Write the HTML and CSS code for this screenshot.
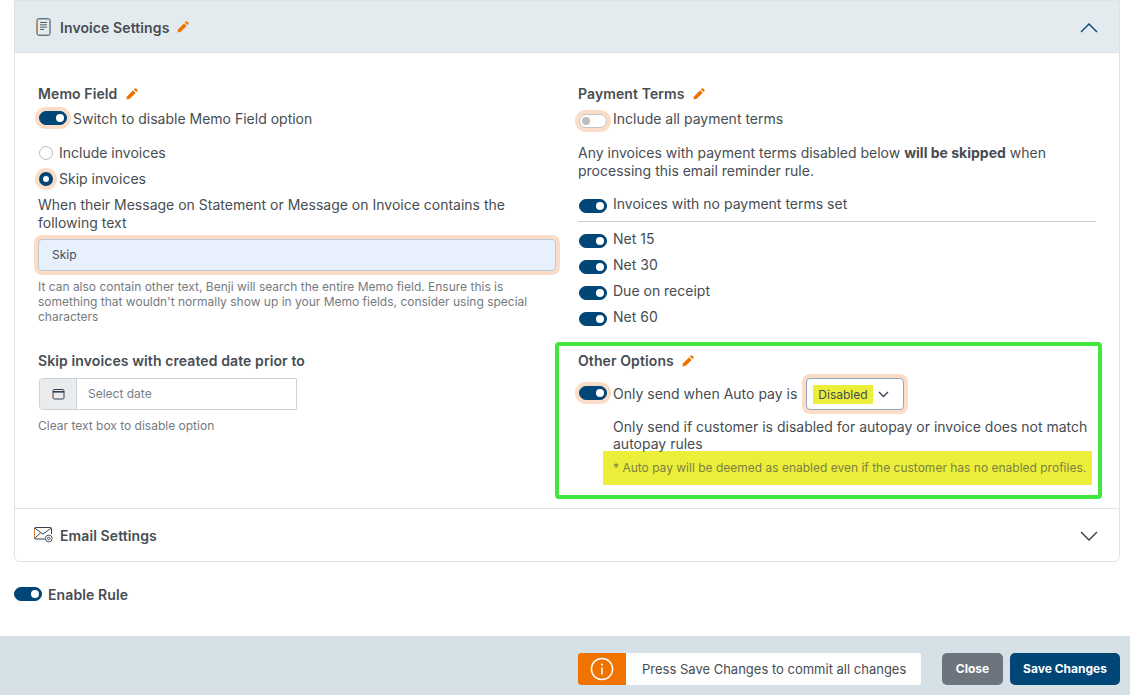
FILE: index.html
```html
<!DOCTYPE html>
<html lang="en">
<head>
<meta charset="utf-8">
<title>Invoice Settings</title>
<link rel="stylesheet" href="styles.css">
</head>
<body>
<svg class="defs" width="0" height="0" aria-hidden="true">
  <symbol id="pencil" viewBox="0 0 12 12">
    <path d="M0.4 11.6l0.8-3.4 5.9-5.9 2.6 2.6-5.9 5.9z" fill="#f07300"/>
    <path d="M7.9 1.5l0.9-0.9c0.4-0.4 1-0.4 1.4 0l1.2 1.2c0.4 0.4 0.4 1 0 1.4l-0.9 0.9z" fill="#f07300"/>
  </symbol>
</svg>
<main class="page">
  <section class="card">
    <header class="card-head open">
      <svg class="head-icon" width="15" height="18" viewBox="0 0 15 18" fill="none">
        <rect x="1" y="0.8" width="13" height="16.4" rx="1.6" stroke="#33414e" stroke-width="1"/>
        <path d="M0.9 3v12" stroke="#d9873f" stroke-width="0.8"/>
        <path d="M4 4.5h7M4 6.8h7M4 9.1h7M4 11.4h4" stroke="#55606b" stroke-width="1"/>
      </svg>
      <h2 class="head-title">Invoice Settings</h2>
      <svg class="pencil pencil-head"><use href="#pencil"/></svg>
      <svg class="chev" width="18" height="10" viewBox="0 0 18 10" fill="none"><path d="M1 9l8-8 8 8" stroke="#004677" stroke-width="1.4"/></svg>
    </header>
    <div class="card-body">
      <div class="col">
        <h3 class="label">Memo Field <svg class="pencil"><use href="#pencil"/></svg></h3>
        <div class="row switch-row"><span class="switch on ring sw-up"></span><span>Switch to disable Memo Field option</span></div>
        <div class="row radio-row first"><span class="radio"></span><span>Include invoices</span></div>
        <div class="row radio-row"><span class="radio checked"></span><span>Skip invoices</span></div>
        <p class="para when">When their Message on Statement or Message on Invoice contains the following text</p>
        <input class="text-input" type="text" value="Skip">
        <p class="help help-memo">It can also contain other text, Benji will search the entire Memo field. Ensure this is something that wouldn't normally show up in your Memo fields, consider using special characters</p>
        <h3 class="label label-date">Skip invoices with created date prior to</h3>
        <div class="date">
          <span class="date-addon">
            <svg width="13" height="12" viewBox="0 0 13 12" fill="none">
              <rect x="1" y="1.5" width="11" height="9.5" rx="1.3" stroke="#33414e"/>
              <path d="M1 3.8h11" stroke="#33414e" stroke-width="1.6"/>
              <path d="M1 5v5" stroke="#d9873f"/>
            </svg>
          </span>
          <span class="date-text">Select date</span>
        </div>
        <p class="help help-date">Clear text box to disable option</p>
      </div>
      <div class="col">
        <h3 class="label">Payment Terms <svg class="pencil"><use href="#pencil"/></svg></h3>
        <div class="row switch-row"><span class="switch ring sw-down"></span><span>Include all payment terms</span></div>
        <p class="para any">Any invoices with payment terms disabled below <b>will be skipped</b> when processing this email reminder rule.</p>
        <div class="row term term-none"><span class="switch on"></span><span>Invoices with no payment terms set</span></div>
        <hr class="rule">
        <div class="row term"><span class="switch on"></span><span>Net 15</span></div>
        <div class="row term"><span class="switch on"></span><span>Net 30</span></div>
        <div class="row term"><span class="switch on"></span><span>Due on receipt</span></div>
        <div class="row term"><span class="switch on"></span><span>Net 60</span></div>
        <div class="other">
          <span class="callout"></span>
          <h3 class="label">Other Options <svg class="pencil"><use href="#pencil"/></svg></h3>
          <div class="row auto-row">
            <span class="switch on ring sw-up"></span><span>Only send when Auto pay is</span>
            <span class="select"><mark class="mark">Disabled</mark>
              <svg width="11" height="7" viewBox="0 0 11 7" fill="none"><path d="M1 1l4.5 4.5L10 1" stroke="#33414e" stroke-width="1.3"/></svg>
            </span>
          </div>
          <p class="para only">Only send if customer is disabled for autopay or invoice does not match autopay rules</p>
          <p class="note">* Auto pay will be deemed as enabled even if the customer has no enabled profiles.</p>
        </div>
      </div>
    </div>
    <header class="card-head closed">
      <svg class="head-icon" width="19" height="16" viewBox="0 0 19 16" fill="none">
        <path d="M11 12H1.5a1 1 0 0 1-1-1V1.5a1 1 0 0 1 1-1h15a1 1 0 0 1 1 1V7" stroke="#33414e"/>
        <path d="M0.5 11V2" stroke="#d9873f"/>
        <path d="M1 1.2l8 6 8-6M1 11l5.5-5" stroke="#33414e"/>
        <circle cx="14.8" cy="11.5" r="3.4" stroke="#33414e" stroke-width="0.9"/>
        <circle cx="14.8" cy="11.5" r="1.3" stroke="#33414e" stroke-width="0.9"/>
      </svg>
      <h2 class="head-title">Email Settings</h2>
      <svg class="chev" width="18" height="10" viewBox="0 0 18 10" fill="none"><path d="M1 1l8 8 8-8" stroke="#33414e" stroke-width="1.4"/></svg>
    </header>
  </section>
  <div class="enable"><span class="switch on sw-up"></span><span class="enable-label">Enable Rule</span></div>
</main>
<footer class="footer">
  <div class="notice">
    <span class="notice-icon">
      <svg width="24" height="24" viewBox="0 0 24 24" fill="none">
        <circle cx="12" cy="12" r="10.6" stroke="#fff" stroke-width="1.5"/>
        <path d="M12 10.5v7" stroke="#fff" stroke-width="1.5"/>
        <circle cx="12" cy="7.4" r="1" fill="#fff"/>
      </svg>
    </span>
    <span class="notice-text">Press Save Changes to commit all changes</span>
  </div>
  <button class="btn btn-close" type="button">Close</button>
  <button class="btn btn-save" type="button">Save Changes</button>
</footer>
</body>
</html>
```
FILE: styles.css
```css
* { box-sizing: border-box; }
html, body { margin: 0; padding: 0; }
body {
  width: 1130px;
  height: 695px;
  overflow: hidden;
  display: flex;
  flex-direction: column;
  background: #fff;
  color: #474d52;
  font-family: Inter, "Liberation Sans", sans-serif;
  font-size: 14px;
  line-height: 18px;
}
.defs { position: absolute; }
.page { flex: 1; padding: 0 10px 0 14px; }
.card {
  border: 1px solid #dfe3e8;
  border-radius: 0 0 6px 6px;
  background: #fff;
}
.card-head {
  display: flex;
  align-items: center;
  height: 52px;
  padding: 0 21px;
}
.card-head.open {
  background: #e4ebef;
  border-bottom: 1px solid #dfe3e8;
  padding-top: 2px;
}
.card-head.closed {
  border-top: 1px solid #dfe3e8;
  height: 53px;
  padding-top: 2px;
  padding-left: 19px;
}
.head-icon { flex: none; }
.open .head-icon { margin-top: -2px; margin-right: 9px; }
.closed .head-icon { margin-top: -3px; margin-right: 7px; }
.head-title { margin: 0; font-size: 14px; font-weight: 600; letter-spacing: 0.1px; color: #474d52; }
.pencil { width: 12px; height: 12px; display: inline-block; vertical-align: -1px; margin-left: 5px; }
.pencil-head { margin-left: 8px; margin-top: -2px; }
.chev { margin-left: auto; }
.card-body {
  display: grid;
  grid-template-columns: 540px 518px;
  padding: 32px 0 0 23px;
  height: 455px;
}
.col { min-width: 0; position: relative; }
.label { margin: 0; font-size: 14px; font-weight: 600; letter-spacing: 0.1px; color: #474d52; line-height: 18px; }
.row { display: flex; align-items: center; }
.switch-row { margin-top: 7px; gap: 6px; padding-left: 1px; }
.switch {
  flex: none;
  position: relative;
  display: inline-block;
  width: 28px;
  height: 14px;
  border-radius: 7px;
  background: #fff;
  border: 1px solid #c4c4c4;
}
.switch::after {
  content: "";
  position: absolute;
  top: 2px;
  left: 2px;
  width: 8px;
  height: 8px;
  border-radius: 50%;
  background: #bdbdbd;
}
.switch.on { background: #004677; border-color: #004677; }
.switch.on::after { left: auto; right: 2px; background: #fff; }
.sw-up { margin-top: -2px; }
.sw-down { margin-top: 4px; }
.ring { box-shadow: 0 0 0 4px #fbdcc6; }
.radio-row { gap: 6px; height: 18px; margin-top: 8px; padding-left: 1px; }
.radio-row.first { margin-top: 16px; }
.radio {
  flex: none;
  width: 14px;
  height: 14px;
  border-radius: 50%;
  border: 1px solid #b8bcc0;
  background: #fff;
}
.radio.checked { border: 4px solid #004677; box-shadow: 0 0 0 4px #fbdcc6; }
.para { margin: 0; }
.when { margin-top: 8px; width: 518px; }
.text-input {
  display: block;
  width: 518px;
  height: 32px;
  margin-top: 7px;
  padding: 0 13px 1px;
  border: 1px solid #bcc8d4;
  border-radius: 4px;
  background: #e8f0fe;
  box-shadow: 0 0 0 4px #fbdcc6;
  font: 12px Inter, "Liberation Sans", sans-serif;
  color: #474d52;
  outline: none;
}
.help { margin: 0; font-size: 12px; line-height: 15px; color: #767b80; }
.help-memo { margin-top: 8px; width: 518px; }
.label-date { margin-top: 28px; }
.date {
  display: flex;
  width: 258px;
  height: 32px;
  margin: 8px 0 0 1px;
  border: 1px solid #ccd1d8;
  border-radius: 4px 0 0 4px;
  background: #fff;
}
.date-addon {
  flex: none;
  width: 37px;
  display: flex;
  align-items: center;
  justify-content: center;
  background: #e9ecef;
  border-right: 1px solid #ccd1d8;
  border-radius: 3px 0 0 3px;
}
.date-text { padding-left: 11px; font-size: 12px; line-height: 30px; color: #767e89; }
.help-date { margin-top: 8px; }
.any { margin-top: 16px; }
.term { align-items: flex-start; margin-top: 8px; gap: 6px; padding-left: 1px; height: 18px; }
.term .switch { margin-top: 4px; }
.term-none { margin-top: 15px; }
.rule { margin: 8px 0; border: 0; border-top: 1px solid #ccc; }
.other { position: relative; margin-top: 26px; }
.callout {
  position: absolute;
  left: -23px;
  right: -6px;
  top: -10px;
  height: 157px;
  border: 4px solid #3fe83f;
  border-radius: 4px;
  pointer-events: none;
}
.auto-row { margin-top: 15px; gap: 6px; padding-left: 1px; height: 18px; }
.select {
  flex: none;
  display: flex;
  align-items: center;
  gap: 5px;
  width: 98px;
  height: 32px;
  margin-left: 3px;
  padding-left: 6px;
  border: 1px solid #8fa6ba;
  border-radius: 4px;
  background: #fff;
  box-shadow: 0 0 0 4px #fbdcc6;
  font-size: 12px;
}
.mark { padding: 0 5px; background: #ecef3a; color: #474d52; line-height: 19px; }
.only { margin: 15px 0 0 35px; line-height: 17px; }
.note {
  margin: -1px 4px 0 25px;
  padding: 9px 5px 10px 10px;
  background: #ecef3a;
  font-size: 12px;
  line-height: 15px;
  color: #7d7f45;
  white-space: nowrap;
}
.enable { display: flex; align-items: center; gap: 6px; margin-top: 24px; }
.enable-label { font-weight: 600; letter-spacing: 0.1px; color: #474d52; }
.footer {
  flex: none;
  display: flex;
  align-items: center;
  height: 59px;
  padding: 7px 10px 0 578px;
  background: #d6e0e7;
}
.notice {
  display: flex;
  width: 343px;
  height: 32px;
  border-radius: 3px;
  overflow: hidden;
  background: #fff;
}
.notice-icon {
  flex: none;
  width: 48px;
  display: flex;
  align-items: center;
  justify-content: center;
  background: #f07300;
}
.notice-text { padding-left: 16px; font-size: 13px; line-height: 32px; color: #474d52; }
.btn {
  height: 32px;
  padding: 0 0 2px;
  border: 0;
  border-radius: 5px;
  color: #fff;
  font: 700 12px Inter, "Liberation Sans", sans-serif;
}
.btn-close { width: 61px; margin-left: 21px; background: #6c757d; }
.btn-save { width: 110px; margin-left: 7px; background: #004677; }
```
